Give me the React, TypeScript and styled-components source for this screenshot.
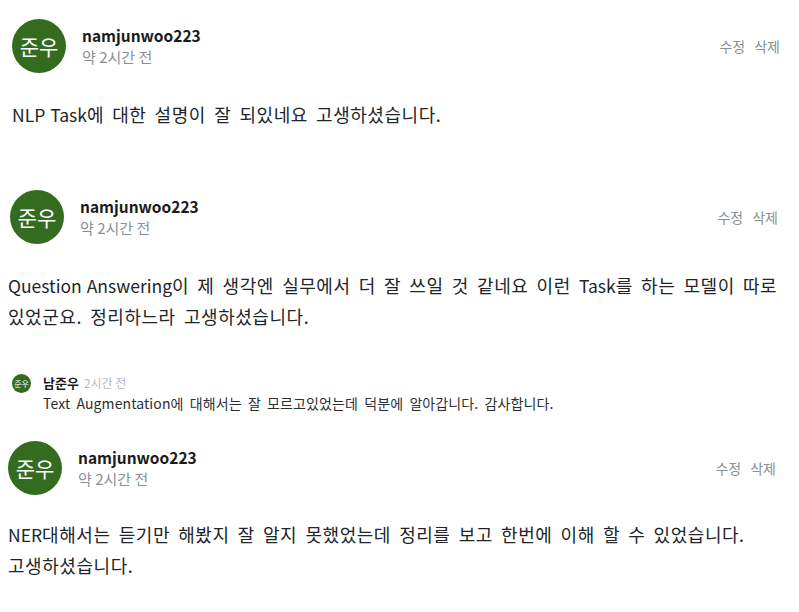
import React from "react";
import styled, { createGlobalStyle } from "styled-components";

const GlobalStyle = createGlobalStyle`
  html, body { margin: 0; padding: 0; background: #ffffff; }
  body {
    font-family: "Noto Sans CJK KR", "Noto Sans", sans-serif;
    color: #212529;
  }
`;

const List = styled.div`
  display: flex;
  flex-direction: column;
  width: 799px;
  padding-top: 19px;
  padding-right: 12px;
  box-sizing: border-box;
`;

const CommentBlock = styled.section<{ $inset: number; $gapAfter: number }>`
  display: flex;
  flex-direction: column;
  padding-left: ${(p) => p.$inset}px;
  margin-right: ${(p) => 12 - p.$inset}px;
  margin-bottom: ${(p) => p.$gapAfter}px;
`;

const Header = styled.div`
  display: flex;
  align-items: center;
  padding-right: 7px;
`;

const Avatar = styled.div<{ $size: number; $font: number }>`
  width: ${(p) => p.$size}px;
  height: ${(p) => p.$size}px;
  border-radius: 50%;
  background: #336b1f;
  color: #ffffff;
  display: flex;
  align-items: center;
  justify-content: center;
  font-size: ${(p) => p.$font}px;
  flex-shrink: 0;
`;

const Meta = styled.div`
  display: flex;
  flex-direction: column;
  margin-left: 16px;
  flex: 1;
`;

const Name = styled.div`
  font-size: 15.5px;
  font-weight: 700;
  color: #1b1b1b;
  line-height: 22px;
`;

const Time = styled.div`
  font-size: 15px;
  color: #8a9099;
  line-height: 22px;
`;

const Actions = styled.div`
  display: flex;
  gap: 9px;
  font-size: 14px;
  color: #8a8f96;
`;

const ActionButton = styled.span`
  cursor: pointer;
`;

const Body = styled.p<{ $shift: number; $top: number }>`
  margin: ${(p) => p.$top}px 0 0 ${(p) => p.$shift}px;
  font-size: 18px;
  line-height: 31px;
  letter-spacing: 0.55px;
  word-spacing: 3.6px;
  word-break: keep-all;
  color: #212529;
`;

const Latin = styled.span`
  font-size: 17.5px;
  letter-spacing: 0;
  word-spacing: 1px;
`;

const Reply = styled.div`
  display: flex;
  align-items: flex-start;
  padding-left: 12px;
  margin-bottom: 27px;
`;

const ReplyContent = styled.div`
  display: flex;
  flex-direction: column;
  margin-left: 12px;
  margin-top: -1px;
`;

const ReplyHead = styled.div`
  display: flex;
  align-items: baseline;
  gap: 5px;
`;

const ReplyName = styled.span`
  font-size: 13px;
  font-weight: 700;
  color: #1b1b1b;
`;

const ReplyTime = styled.span`
  font-size: 12px;
  color: #b5b9be;
`;

const ReplyText = styled.div`
  font-size: 14px;
  letter-spacing: 0.1px;
  word-spacing: 3px;
  color: #2b2f33;
  line-height: 22px;
`;

type C = { inset: number; shift: number; top: number; gap: number; text: string };

const comments: C[] = [
  { inset: 12, shift: 0, top: 26, gap: 60, text: "NLP Task에 대한 설명이 잘 되있네요 고생하셨습니다." },
  {
    inset: 10,
    shift: -2,
    top: 26,
    gap: 42,
    text: "Question Answering이 제 생각엔 실무에서 더 잘 쓰일 것 같네요 이런 Task를 하는 모델이 따로 있었군요. 정리하느라 고생하셨습니다.",
  },
  {
    inset: 8,
    shift: 0,
    top: 24,
    gap: 0,
    text: "NER대해서는 듣기만 해봤지 잘 알지 못했었는데 정리를 보고 한번에 이해 할 수 있었습니다. 고생하셨습니다.",
  },
];

function renderText(text: string) {
  const parts = text.split(/([A-Za-z]+(?: [A-Za-z]+)*)/);
  return parts.map((part, i) =>
    i % 2 === 1 ? <Latin key={i}>{part}</Latin> : <React.Fragment key={i}>{part}</React.Fragment>
  );
}

function Comment({ c }: { c: C }) {
  return (
    <CommentBlock $inset={c.inset} $gapAfter={c.gap}>
      <Header>
        <Avatar $size={54} $font={21}>준우</Avatar>
        <Meta>
          <Name>namjunwoo223</Name>
          <Time>약 2시간 전</Time>
        </Meta>
        <Actions>
          <ActionButton>수정</ActionButton>
          <ActionButton>삭제</ActionButton>
        </Actions>
      </Header>
      <Body $shift={c.shift} $top={c.top}>{renderText(c.text)}</Body>
    </CommentBlock>
  );
}

export default function App() {
  return (
    <>
      <GlobalStyle />
      <List>
        <Comment c={comments[0]} />
        <Comment c={comments[1]} />
        <Reply>
          <Avatar $size={19} $font={8}>준우</Avatar>
          <ReplyContent>
            <ReplyHead>
              <ReplyName>남준우</ReplyName>
              <ReplyTime>2시간 전</ReplyTime>
            </ReplyHead>
            <ReplyText>
              Text Augmentation에 대해서는 잘 모르고있었는데 덕분에 알아갑니다. 감사합니다.
            </ReplyText>
          </ReplyContent>
        </Reply>
        <Comment c={comments[2]} />
      </List>
    </>
  );
}
